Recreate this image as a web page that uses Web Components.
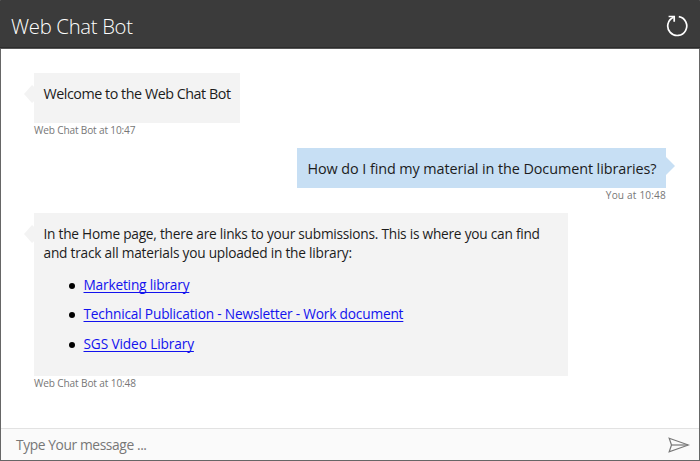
<!DOCTYPE html>
<html lang="en">
<head>
<meta charset="utf-8">
<title>Web Chat Bot</title>
<style>
html, body { margin: 0; height: 100%; overflow: hidden; }
body { font-family: "Open Sans", "Noto Sans", sans-serif; color: #1c1c1c; }
</style>
</head>
<body>
<chat-window>
  <chat-header slot="header"><text-line width="122">Web Chat Bot</text-line></chat-header>
  <chat-message style="--w:206px;--h:50px;--size:14.3px;--line:20px">
    <text-line width="187.5">Welcome to the Web Chat Bot</text-line>
    <text-line slot="meta" width="101.5">Web Chat Bot at 10:47</text-line>
  </chat-message>
  <chat-message from="user" style="--w:369px;--h:40px;--size:14.4px;--line:20px">
    <text-line width="349">How do I find my material in the Document libraries?</text-line>
    <text-line slot="meta" width="60">You at 10:48</text-line>
  </chat-message>
  <chat-message style="--w:533.5px;--h:163px;--size:13.7px;--line:19px">
    <text-line width="496.5">In the Home page, there are links to your submissions. This is where you can find</text-line>
    <text-line width="308.5">and track all materials you uploaded in the library:</text-line>
    <link-list>
      <link-item><text-line width="106">Marketing library</text-line></link-item>
      <link-item><text-line width="320">Technical Publication - Newsletter - Work document</text-line></link-item>
      <link-item><text-line width="110.5">SGS Video Library</text-line></link-item>
    </link-list>
    <text-line slot="meta" width="102">Web Chat Bot at 10:48</text-line>
  </chat-message>
  <chat-input slot="footer"><text-line width="131">Type Your message ...</text-line></chat-input>
</chat-window>

<script>
function define(name, html, setup) {
  const template = document.createElement('template');
  template.innerHTML = html;
  customElements.define(name, class extends HTMLElement {
    constructor() {
      super();
      this.attachShadow({ mode: 'open' }).append(template.content.cloneNode(true));
    }
    connectedCallback() { if (setup) setup(this); }
  });
}

define('chat-window', `
<style>
:host { box-sizing: border-box; display: flex; flex-direction: column; width: 700px; height: 461px;
  border: 1px solid #666; border-top-color: #3b3b3b; background: #fff; }
main { flex: 1; min-height: 0; padding: 24px 33px 0; display: flex; flex-direction: column; }
</style>
<slot name="header"></slot>
<main><slot></slot></main>
<slot name="footer"></slot>`);

define('chat-header', `
<style>
:host { box-sizing: border-box; display: flex; align-items: center; justify-content: space-between;
  height: 48px; margin: 0 -1px; padding: 2px 12px 0 11px; background: #3b3b3b; color: #fff;
  border-bottom: 1px solid #555; box-shadow: inset 0 -1px #2c2c2c; font-size: 20.3px; font-weight: 300; line-height: 28px; }
svg { display: block; margin-top: 1px; }
</style>
<slot></slot>
<svg width="22" height="22" viewBox="0 0 22 22" fill="none" stroke="#fff" stroke-width="1.7">
  <path d="M12.8 1.6A9.5 9.5 0 1 1 7.6 2.2"/><path d="M2.6 1.5H8.2V6.8"/>
</svg>`);

define('chat-message', `
<style>
:host { display: flex; flex-direction: column; align-items: flex-start; margin-bottom: 10px; --fill: #f3f3f3; }
:host([from="user"]) { align-items: flex-end; --fill: #c7dff4; }
.bubble { position: relative; box-sizing: border-box; width: var(--w); height: var(--h);
  padding: 11px 9.5px 9px; background: var(--fill); font-size: var(--size); line-height: var(--line); }
:host([from="user"]) .bubble { padding-left: 10.5px; }
.bubble::before { content: ""; position: absolute; top: 12px; left: -10px; width: 10px; height: 18px;
  background: var(--fill); clip-path: polygon(0 50%, 80% 0, 100% 10%, 100% 90%, 80% 100%); }
:host([from="user"]) .bubble::before { top: 9px; left: auto; right: -9px; width: 9px;
  clip-path: polygon(0 0, 100% 50%, 0 100%); }
.meta { height: 15px; font-size: 10.1px; line-height: 15px; color: #777; }
</style>
<div class="bubble"><slot></slot></div>
<div class="meta"><slot name="meta"></slot></div>`);

define('link-list', `
<style>:host { display: flex; flex-direction: column; gap: 10.5px; padding: 12.5px 0 0 40px; }</style>
<slot></slot>`);

define('link-item', `
<style>
:host { display: flex; align-items: center; position: relative; height: 19px; }
:host::before { content: ""; position: absolute; left: -15px; top: 8px; width: 6px; height: 6px;
  border-radius: 50%; background: #000; }
a { color: #1212ee; text-decoration: underline; text-decoration-thickness: 1px;
  text-underline-offset: 2px; text-decoration-skip-ink: none; }
</style>
<a href="#"><slot></slot></a>`);

define('chat-input', `
<style>
:host { box-sizing: border-box; display: flex; align-items: center; justify-content: space-between;
  height: 32px; padding: 1px 9px 0 15px; border-top: 1px solid #e2e2e2; background: #fafafa;
  color: #777; font-size: 13.8px; line-height: 20px; }
svg { display: block; }
</style>
<slot></slot>
<svg width="22" height="16" viewBox="0 0 22 16" fill="none" stroke="#777" stroke-width="1.2" stroke-linejoin="miter">
  <path d="M1.2 1.2L20.5 8L1.2 14.8L3.5 8Z"/><path d="M3.5 8H20"/>
</svg>`);

/* One unwrapped line whose tracking is spread to fill the width attribute. */
define('text-line', `
<style>:host { display: block; width: max-content; white-space: nowrap; }</style><slot></slot>`, el => {
  requestAnimationFrame(() => {
    const chars = el.textContent.length;
    const natural = el.getBoundingClientRect().width;
    el.style.letterSpacing = (Number(el.getAttribute('width')) - natural) / (chars - 1) + 'px';
  });
});
</script>
</body>
</html>
